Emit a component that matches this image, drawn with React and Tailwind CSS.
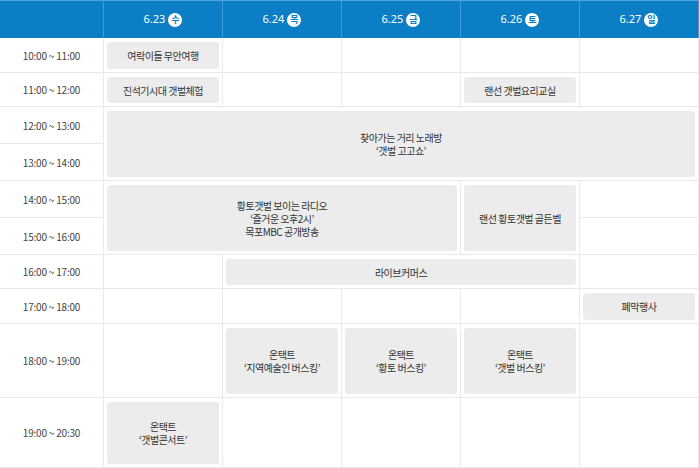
import React from "react";

const days = [
  ["6.23", "수"],
  ["6.24", "목"],
  ["6.25", "금"],
  ["6.26", "토"],
  ["6.27", "일"],
];

const times = [
  "10:00 ~ 11:00",
  "11:00 ~ 12:00",
  "12:00 ~ 13:00",
  "13:00 ~ 14:00",
  "14:00 ~ 15:00",
  "15:00 ~ 16:00",
  "16:00 ~ 17:00",
  "17:00 ~ 18:00",
  "18:00 ~ 19:00",
  "19:00 ~ 20:30",
];

// c, r: 1-based day / time index (used only to know which slots are covered)
const events = [
  { c: 1, r: 1, cs: 1, rs: 1, cls: "col-start-2 row-start-2", t: ["여락이들 무안여행"] },
  { c: 1, r: 2, cs: 1, rs: 1, cls: "col-start-2 row-start-3", t: ["진석기시대 갯벌체험"] },
  { c: 4, r: 2, cs: 1, rs: 1, cls: "col-start-5 row-start-3", t: ["랜선 갯벌요리교실"] },
  { c: 1, r: 3, cs: 5, rs: 2, cls: "col-start-2 col-span-5 row-start-4 row-span-2", t: ["찾아가는 거리 노래방", "‘갯벌 고고쇼’"] },
  { c: 1, r: 5, cs: 3, rs: 2, cls: "col-start-2 col-span-3 row-start-6 row-span-2", t: ["황토갯벌 보이는 라디오", "‘즐거운 오후2시’", "목포MBC 공개방송"] },
  { c: 4, r: 5, cs: 1, rs: 2, cls: "col-start-5 row-start-6 row-span-2", t: ["랜선 황토갯벌 골든벨"] },
  { c: 2, r: 7, cs: 3, rs: 1, cls: "col-start-3 col-span-3 row-start-8", t: ["라이브커머스"] },
  { c: 5, r: 8, cs: 1, rs: 1, cls: "col-start-6 row-start-9", t: ["폐막행사"] },
  { c: 2, r: 9, cs: 1, rs: 1, cls: "col-start-3 row-start-10", t: ["온택트", "‘지역예술인 버스킹’"] },
  { c: 3, r: 9, cs: 1, rs: 1, cls: "col-start-4 row-start-10", t: ["온택트", "‘황토 버스킹’"] },
  { c: 4, r: 9, cs: 1, rs: 1, cls: "col-start-5 row-start-10", t: ["온택트", "‘갯벌 버스킹’"] },
  { c: 1, r: 10, cs: 1, rs: 1, cls: "col-start-2 row-start-11", t: ["온택트", "‘갯벌콘서트’"] },
];

const covered = new Set();
events.forEach((e) => {
  for (let r = e.r; r < e.r + e.rs; r++)
    for (let c = e.c; c < e.c + e.cs; c++) covered.add(r + "-" + c);
});

export default function App() {
  const cells = [];
  times.forEach((tm, i) => {
    cells.push(
      <div
        key={"t" + i}
        className="flex items-center justify-center border-r border-b border-[#e9e9e9] text-[10px] text-[#444] tracking-[-0.2px]"
      >
        {tm}
      </div>
    );
    for (let d = 1; d <= 5; d++) {
      if (covered.has(i + 1 + "-" + d)) continue;
      cells.push(<div key={"c" + i + "-" + d} className="border-r border-b border-[#e9e9e9]" />);
    }
  });

  return (
    <div className="w-[699px] h-[468px] overflow-hidden bg-white font-['Noto_Sans_CJK_KR','Noto_Sans',sans-serif]">
      <div className="grid grid-cols-[104px_repeat(5,119px)] grid-rows-[38px_35px_34px_37px_37px_37px_37px_34px_35px_74px_70px]">
        <div className="bg-[#0c7ec6] border-r border-t border-t-[#4ea4dc] border-r-[#3d9bd6]" />
        {days.map(([d, w]) => (
          <div
            key={d}
            className="bg-[#0c7ec6] border-r border-t border-t-[#4ea4dc] border-r-[#3d9bd6] flex items-center justify-center gap-[3px] text-white text-[11px] font-['Noto_Sans',sans-serif]"
          >
            <span>{d}</span>
            <span className="w-[14px] h-[14px] rounded-full bg-white text-[#0c7ec6] text-[9px] font-bold flex items-center justify-center leading-none font-['Noto_Sans_CJK_KR',sans-serif]">
              {w}
            </span>
          </div>
        ))}
        {cells}
        {events.map((e, i) => (
          <div
            key={"e" + i}
            className={
              e.cls + " border-r border-b border-[#e9e9e9] pt-[4px] pb-[3px] px-[3px]"
            }
          >
            <div className="w-full h-full bg-[#ececec] rounded-[3px] flex flex-col items-center justify-center text-[10px] text-[#333] tracking-[-0.5px] text-center">
              {e.t.map((l, j) => (
                <span key={j} className="block leading-[13px] h-[13px]">
                  {l}
                </span>
              ))}
            </div>
          </div>
        ))}
      </div>
    </div>
  );
}
